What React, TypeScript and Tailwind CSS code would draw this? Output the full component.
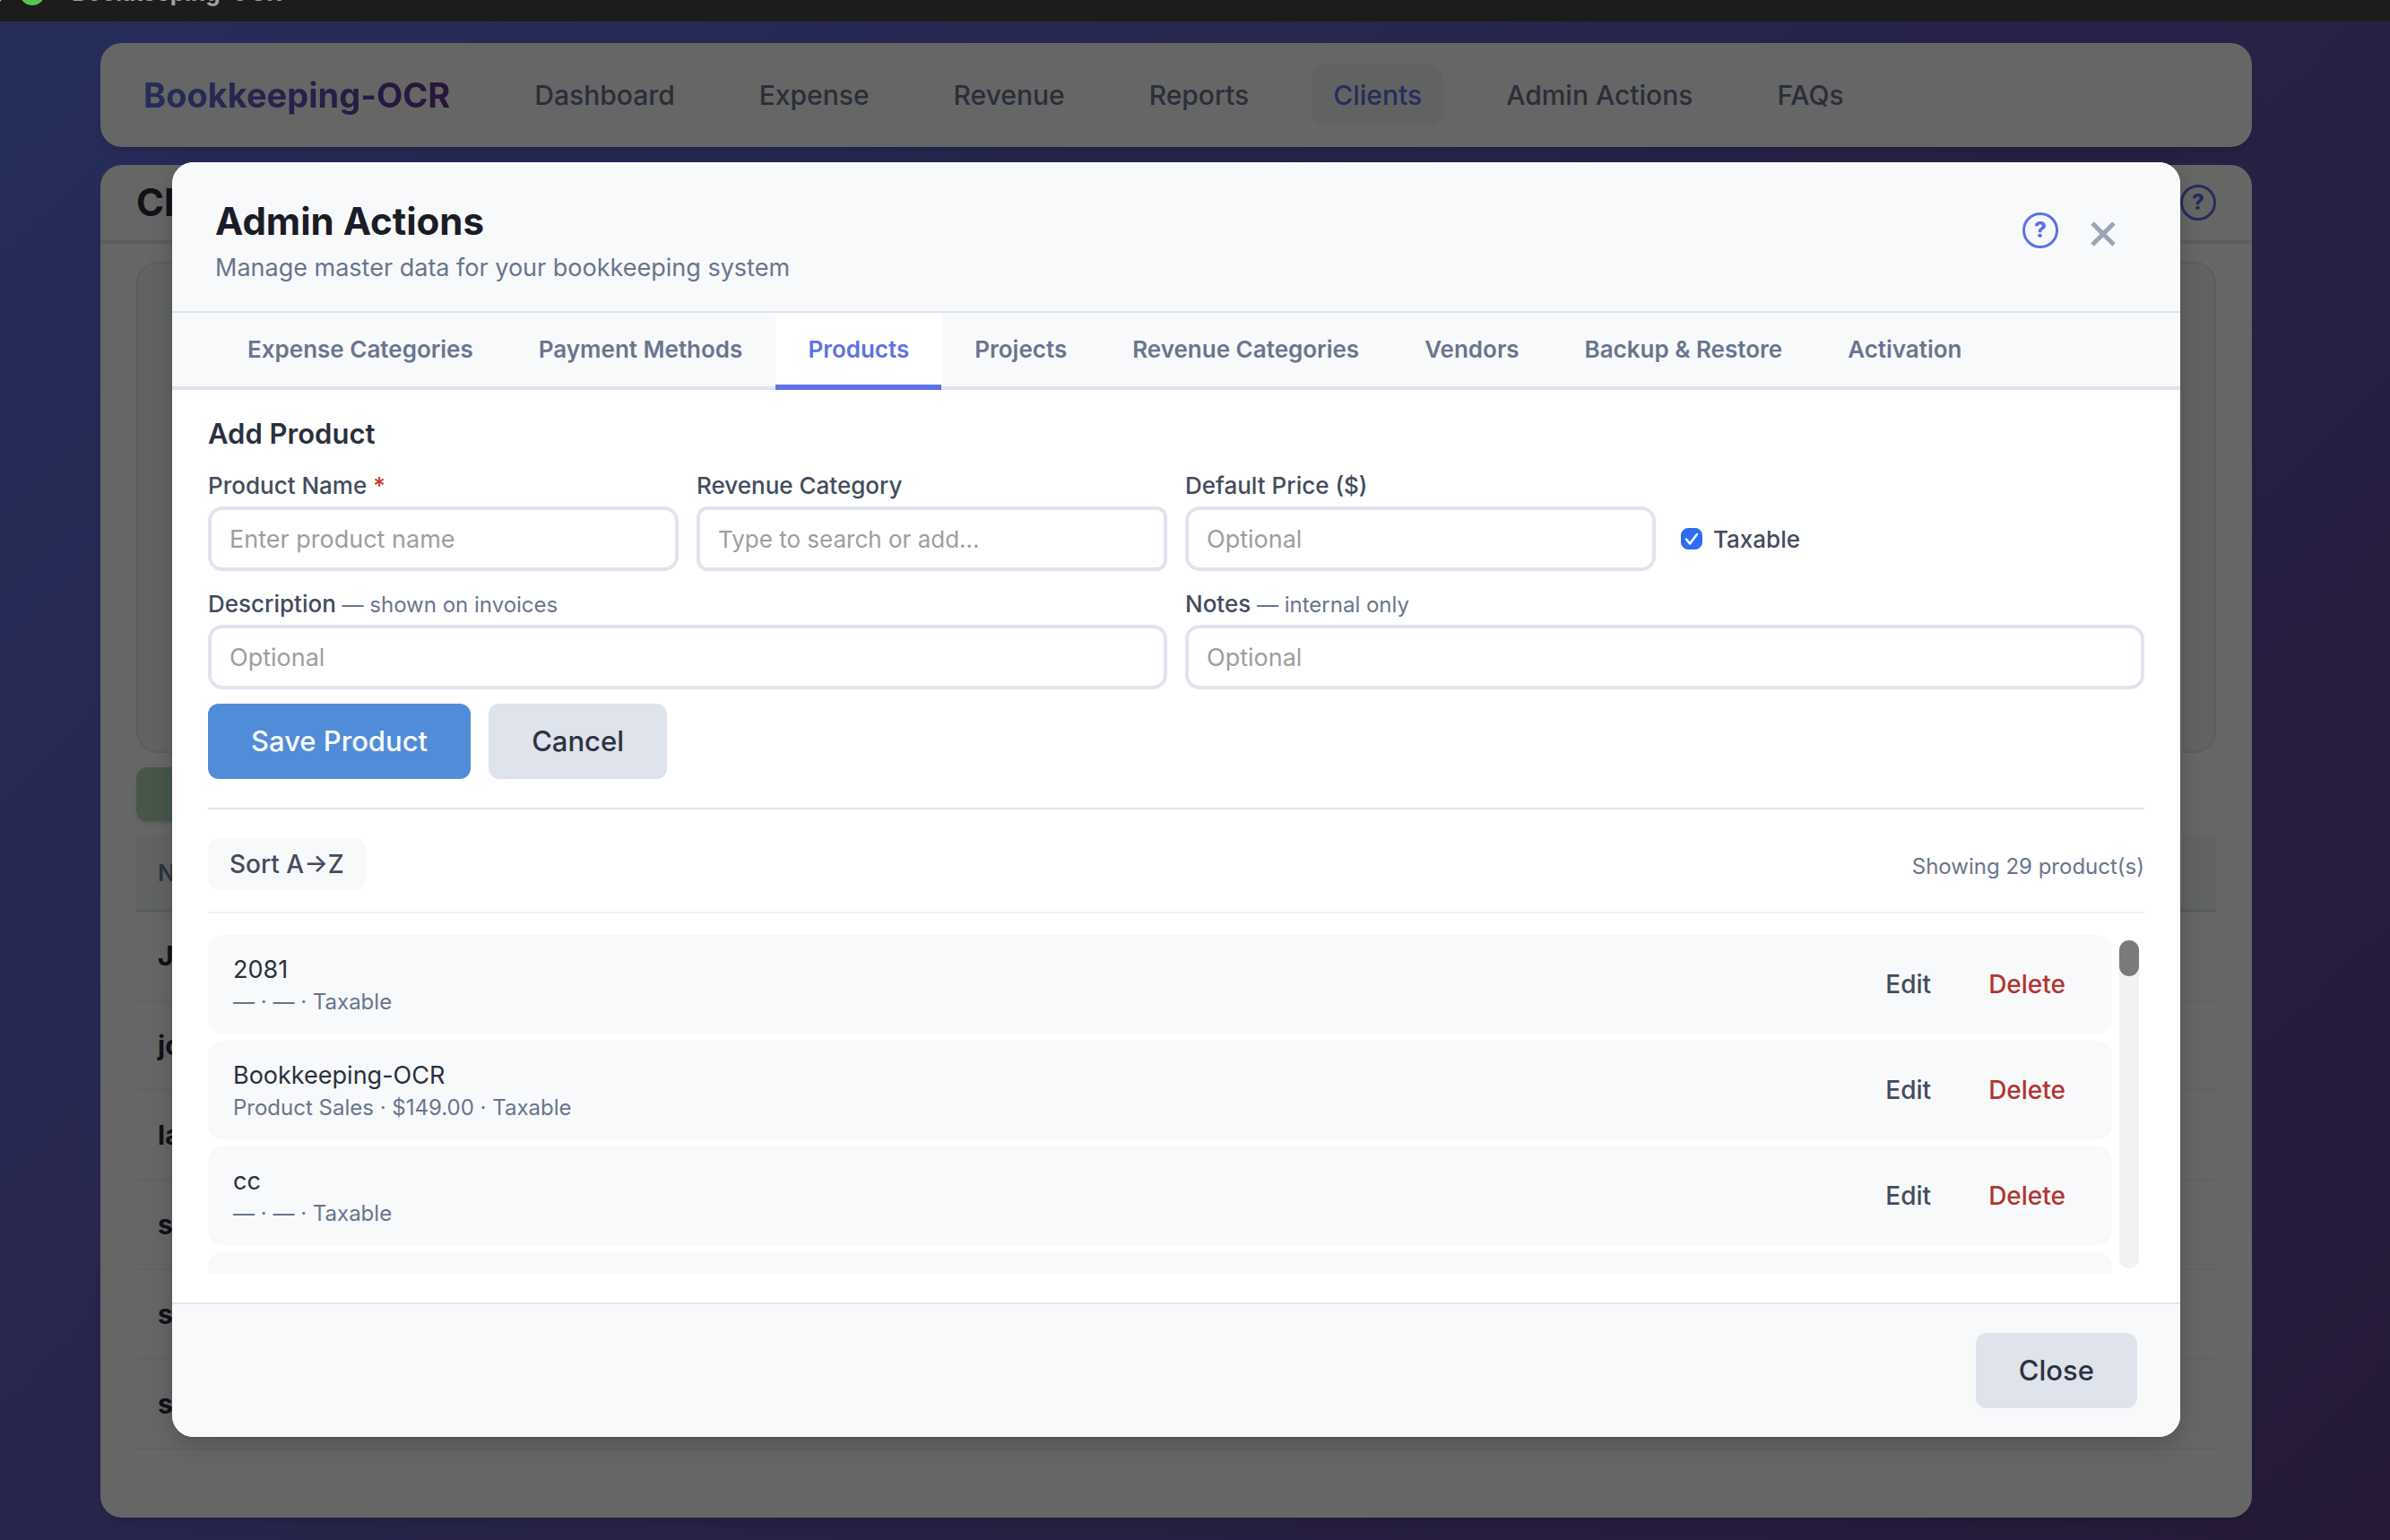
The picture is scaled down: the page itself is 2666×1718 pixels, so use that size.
import React, { useState } from "react";

const navItems = ["Dashboard", "Expense", "Revenue", "Reports", "Clients", "Admin Actions", "FAQs"];

const tabs = [
  "Expense Categories",
  "Payment Methods",
  "Products",
  "Projects",
  "Revenue Categories",
  "Vendors",
  "Backup & Restore",
  "Activation",
];

const clients = ["J", "jo", "la", "s", "s", "s"];

const products = [
  { id: 1, name: "2081", detail: "— · — · Taxable" },
  { id: 2, name: "Bookkeeping-OCR", detail: "Product Sales · $149.00 · Taxable" },
  { id: 3, name: "cc", detail: "— · — · Taxable" },
  { id: 4, name: "", detail: "" },
];

const HelpButton: React.FC = () => (
  <button
    aria-label="Help"
    className="flex h-10 w-10 items-center justify-center rounded-full border-3 border-[#5e72e4] text-[24px] leading-none font-extrabold text-[#5e72e4]"
  >
    ?
  </button>
);

interface FieldProps {
  id: string;
  label: string;
  placeholder: string;
  hint?: string;
  required?: boolean;
  className?: string;
  inputClass?: string;
}

const Field: React.FC<FieldProps> = ({
  id,
  label,
  placeholder,
  hint,
  required,
  className = "",
  inputClass = "rounded-2xl text-[27px]",
}) => (
  <div className={`flex flex-col gap-[6px] ${className}`}>
    <label htmlFor={id} className="h-[34px] text-[26px] leading-[34px] font-medium text-[#434c5e]">
      {label}
      {required && <span className="text-[#c9352c]"> *</span>}
      {hint && <span className="text-[24px] font-normal text-[#69758f]"> — {hint}</span>}
    </label>
    <input
      id={id}
      type="text"
      placeholder={placeholder}
      className={`h-[72px] w-full border-4 border-[#dfe4ed] bg-white px-5 text-[#2d3240] outline-none placeholder:text-[#9e9e9e] ${inputClass}`}
    />
  </div>
);

const TitleBar: React.FC = () => (
  <div className="flex h-6 flex-col justify-end overflow-hidden bg-[#1c1c1c]">
    <div className="-ml-6 flex items-center gap-[18px] pb-[18px]">
      <span className="h-7 w-7 shrink-0 rounded-full bg-[#f5bf2f]"></span>
      <span className="h-7 w-7 shrink-0 rounded-full bg-[#5ac350]"></span>
      <span className="ml-3 text-[26px] leading-7 font-bold text-[#a0a0a0]">Bookkeeping-OCR</span>
    </div>
  </div>
);

const NavBar: React.FC = () => (
  <header className="flex items-center gap-[70px] rounded-3xl bg-white px-12 py-6 shadow-lg">
    <a
      href="#"
      className="bg-linear-to-r from-[#5e72e4] to-[#61348a] bg-clip-text text-[38px] leading-[52px] font-bold text-transparent"
    >
      Bookkeeping-OCR
    </a>
    <nav className="flex gap-[46px]">
      {navItems.map((item) => (
        <a
          key={item}
          href="#"
          className={`rounded-2xl px-6 py-3 text-[30px] leading-[44px] font-medium ${
            item === "Clients" ? "bg-[#f3f8f5] text-[#5e72e4]" : "text-[#68768c]"
          }`}
        >
          {item}
        </a>
      ))}
    </nav>
  </header>
);

const ClientsPage: React.FC = () => (
  <section className="flex flex-1 flex-col rounded-3xl bg-white shadow-lg">
    <div className="flex h-[88px] items-center justify-between border-b-4 border-[#e2e8f0] px-10">
      <h1 className="text-[42px] leading-[52px] font-bold text-[#2a2d3a]">Clients</h1>
      <HelpButton />
    </div>
    <div className="px-10 pt-5">
      <div className="h-[548px] rounded-3xl border-2 border-[#e2e8f0] bg-[#f3f8f5]"></div>
      <button
        aria-label="Add client"
        className="mt-4 block h-[60px] w-60 rounded-xl bg-[#afdaba] shadow-md"
      ></button>
      <table className="mt-4 w-full border-collapse text-left">
        <thead>
          <tr className="h-[84px] border-b-4 border-[#e2e8f0] bg-[#f3f8f5]">
            <th className="px-6 text-[26px] font-semibold text-[#718096]">Name</th>
          </tr>
        </thead>
        <tbody>
          {clients.map((client, index) => (
            <tr key={index} className="h-[100px] border-b-2 border-[#f4f6f8]">
              <td className="px-6 text-[30px] font-bold text-[#2a2d3a]">{client}</td>
            </tr>
          ))}
        </tbody>
      </table>
    </div>
  </section>
);

const ProductForm: React.FC = () => {
  const [taxable, setTaxable] = useState(true);

  return (
    <form onSubmit={(e) => e.preventDefault()}>
      <h3 className="mb-5 text-[31px] leading-[42px] font-semibold text-[#2a303e]">Add Product</h3>
      <div className="grid grid-cols-4 gap-5">
        <Field id="name" label="Product Name" placeholder="Enter product name" required />
        <Field
          id="category"
          label="Revenue Category"
          placeholder="Type to search or add..."
          inputClass="rounded-xl text-[26px]"
        />
        <Field id="price" label="Default Price ($)" placeholder="Optional" />
        <label className="flex h-[72px] items-center gap-3 self-end pl-2 text-[26px] font-medium text-[#434c5e]">
          <span className="relative h-6 w-6">
            <input
              type="checkbox"
              checked={taxable}
              onChange={() => setTaxable(!taxable)}
              className="peer block h-6 w-6 appearance-none rounded-lg border border-[#c0c4cc] bg-white checked:border-[#2f6cf6] checked:bg-[#2f6cf6]"
            />
            <svg
              viewBox="0 0 24 24"
              className="pointer-events-none absolute inset-0 hidden h-6 w-6 peer-checked:block"
              fill="none"
              stroke="white"
              strokeWidth="2.5"
              strokeLinecap="round"
              strokeLinejoin="round"
            >
              <path d="M6 12.5L10 17.5L18 7" />
            </svg>
          </span>
          Taxable
        </label>
        <Field
          id="description"
          label="Description"
          hint="shown on invoices"
          placeholder="Optional"
          className="col-span-2"
        />
        <Field id="notes" label="Notes" hint="internal only" placeholder="Optional" className="col-span-2" />
      </div>
      <div className="mt-4 flex gap-5">
        <button
          type="submit"
          className="h-[84px] rounded-xl bg-[#508cd8] px-12 text-[31px] font-medium text-white"
        >
          Save Product
        </button>
        <button
          type="button"
          className="h-[84px] rounded-xl bg-[#dfe3ec] px-12 text-[31px] font-medium text-[#2d3240]"
        >
          Cancel
        </button>
      </div>
    </form>
  );
};

const ProductList: React.FC = () => (
  <div className="mt-6 flex h-[378px] gap-2 overflow-hidden pr-[6px]">
    <ul className="flex flex-1 flex-col gap-2">
      {products.map((product) => (
        <li
          key={product.id}
          className="flex h-[110px] shrink-0 items-center justify-between rounded-2xl bg-[#f8f9fb] px-7"
        >
          <div>
            <p className="text-[27px] leading-10 text-[#2a303e]">{product.name}</p>
            <p className="text-[24px] leading-8 text-[#69758f]">{product.detail}</p>
          </div>
          {product.name && (
            <div className="flex gap-4 text-[28px] font-medium">
              <button className="px-6 py-2 text-[#434c5e]">Edit</button>
              <button className="px-6 py-2 text-[#b2352f]">Delete</button>
            </div>
          )}
        </li>
      ))}
    </ul>
    <div className="my-[6px] w-[22px] rounded-full bg-[#f2f2f2]">
      <div className="h-10 rounded-full bg-[#7a7a7a]"></div>
    </div>
  </div>
);

const AdminModal: React.FC = () => {
  const [activeTab, setActiveTab] = useState("Products");

  return (
    <div
      role="dialog"
      aria-label="Admin Actions"
      className="w-full max-w-[2240px] self-start overflow-hidden rounded-3xl bg-white shadow-[0_8px_24px_rgba(0,0,0,0.2)]"
    >
      <div className="flex items-start justify-between border-b-2 border-[#dfe4ed] bg-[#f8f9fb] px-12 pt-10 pb-7">
        <div>
          <h2 className="text-[42px] leading-[52px] font-bold text-[#1a1c26]">Admin Actions</h2>
          <p className="mt-[6px] text-[27px] leading-10 text-[#69758f]">
            Manage master data for your bookkeeping system
          </p>
        </div>
        <div className="mt-4 flex gap-3">
          <HelpButton />
          <button aria-label="Close" className="flex h-12 w-[76px] items-center justify-center">
            <svg viewBox="0 0 28 28" className="h-7 w-7" stroke="#9aa5b8" strokeWidth="5">
              <path d="M2 2L26 26M26 2L2 26" />
            </svg>
          </button>
        </div>
      </div>

      <div role="tablist" className="flex gap-px border-b-4 border-[#dfe4ed] bg-[#f8f9fb] px-12">
        {tabs.map((tab) => (
          <button
            key={tab}
            role="tab"
            aria-selected={tab === activeTab}
            onClick={() => setActiveTab(tab)}
            className={`-mb-1 h-[86px] border-b-6 px-9 text-[26px] font-semibold ${
              tab === activeTab
                ? "border-[#5e72e4] bg-white text-[#5e72e4]"
                : "border-transparent text-[#69758f]"
            }`}
          >
            {tab}
          </button>
        ))}
      </div>

      <div className="px-10 pt-7 pb-8">
        <ProductForm />
        <div className="mt-8 flex items-center justify-between border-t-2 border-b-2 border-t-[#dfe3ec] border-b-[#eef1f5] pt-8 pb-6">
          <button className="h-[58px] rounded-xl bg-[#f8f9fb] px-6 text-[28px] font-medium text-[#434c5e]">
            Sort A→Z
          </button>
          <p className="pt-[6px] text-[24px] text-[#69758f]">Showing 29 product(s)</p>
        </div>
        <ProductList />
      </div>

      <div className="flex justify-end border-t-2 border-[#dfe4ed] bg-[#f8f9fb] px-12 py-8">
        <button className="h-[84px] rounded-xl bg-[#dfe3ec] px-12 text-[31px] font-medium text-[#2d3240]">
          Close
        </button>
      </div>
    </div>
  );
};

const App: React.FC = () => {
  return (
    <div className="flex min-h-screen flex-col font-[Inter,'Liberation_Sans',sans-serif]">
      <TitleBar />
      <main className="relative flex flex-1 flex-col bg-linear-135 from-[#5e72e4] to-[#60408c]">
        <div className="mr-[42px] flex flex-1 flex-col pt-6 pb-[25px]">
          <div className="mx-auto flex w-full max-w-[2400px] flex-1 flex-col gap-5">
            <NavBar />
            <ClientsPage />
          </div>
        </div>
        <div className="absolute inset-0 flex justify-center bg-black/60 pt-[157px] pr-[42px]">
          <AdminModal />
        </div>
      </main>
    </div>
  );
};

export default App;
